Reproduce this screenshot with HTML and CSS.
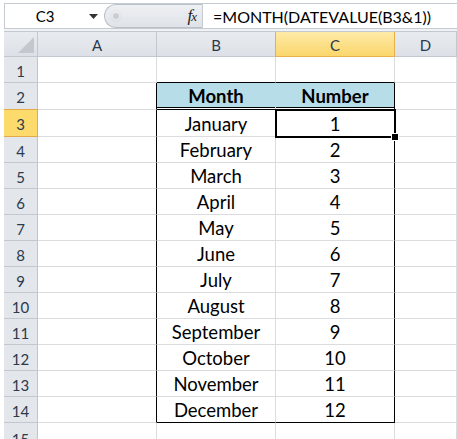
FILE: index.html
```
<!DOCTYPE html>
<html>
<head>
<meta charset="utf-8">
<link rel="stylesheet" href="styles.css">
</head>
<body>
<div class="formula-bar">
  <div class="name-box">C3</div>
  <div class="dropdown"><svg width="9" height="5" viewBox="0 0 9 5"><polygon points="0,0 9,0 4.5,5" fill="#333"/></svg></div>
  <div class="fx-area">
    <span class="knob"><span class="knob-dot"></span></span>
    <span class="fx"><i>f</i><i class="x">x</i></span>
  </div>
  <div class="formula">=MONTH(DATEVALUE(B3&amp;1))</div>
</div>
<div class="bar-sep"></div>
<div class="sheet">
  <div class="corner"><svg width="16" height="16" viewBox="0 0 16 16"><polygon points="16,0 16,16 0,16" fill="#c3c8cf"/></svg></div>
  <div class="colh">A</div>
  <div class="colh">B</div>
  <div class="colh sel">C</div>
  <div class="colh">D</div>

  <div class="rowh">1</div><div class="cell"></div><div class="cell top-b"></div><div class="cell top-b"></div><div class="cell"></div>
  <div class="rowh">2</div><div class="cell tl"></div><div class="cell head">Month</div><div class="cell head head-r">Number</div><div class="cell"></div>
  <div class="rowh sel">3</div><div class="cell tl"></div><div class="cell">January</div><div class="cell tr">1</div><div class="cell"></div>
  <div class="rowh">4</div><div class="cell tl"></div><div class="cell">February</div><div class="cell tr">2</div><div class="cell"></div>
  <div class="rowh">5</div><div class="cell tl"></div><div class="cell">March</div><div class="cell tr">3</div><div class="cell"></div>
  <div class="rowh">6</div><div class="cell tl"></div><div class="cell">April</div><div class="cell tr">4</div><div class="cell"></div>
  <div class="rowh">7</div><div class="cell tl"></div><div class="cell">May</div><div class="cell tr">5</div><div class="cell"></div>
  <div class="rowh">8</div><div class="cell tl"></div><div class="cell">June</div><div class="cell tr">6</div><div class="cell"></div>
  <div class="rowh">9</div><div class="cell tl"></div><div class="cell">July</div><div class="cell tr">7</div><div class="cell"></div>
  <div class="rowh">10</div><div class="cell tl"></div><div class="cell">August</div><div class="cell tr">8</div><div class="cell"></div>
  <div class="rowh">11</div><div class="cell tl"></div><div class="cell">September</div><div class="cell tr">9</div><div class="cell"></div>
  <div class="rowh">12</div><div class="cell tl"></div><div class="cell">October</div><div class="cell tr">10</div><div class="cell"></div>
  <div class="rowh">13</div><div class="cell tl"></div><div class="cell">November</div><div class="cell tr">11</div><div class="cell"></div>
  <div class="rowh">14</div><div class="cell tl"></div><div class="cell bot">December</div><div class="cell tr bot">12</div><div class="cell"></div>
  <div class="rowh">15</div><div class="cell"></div><div class="cell"></div><div class="cell"></div><div class="cell"></div>

  <div class="selection"><span class="handle"></span></div>
</div>
</body>
</html>
```
FILE: styles.css
```
html, body {
  margin: 0;
  padding: 0;
  background: #fff;
  overflow: hidden;
}
body {
  width: 457px;
  height: 439px;
  font-family: Lato, "Open Sans", sans-serif;
  color: #000;
}
.formula-bar {
  margin: 3px 0 0 4px;
  height: 24px;
  border-top: 1px solid #c6cbd2;
  border-bottom: 1px solid #c6cbd2;
  border-left: 1px solid #c6cbd2;
  display: flex;
  align-items: stretch;
}
.name-box {
  width: 76px;
  font-size: 15px;
  display: flex;
  align-items: center;
  justify-content: center;
  padding-left: 2px;
}
.dropdown {
  width: 21px;
  display: flex;
  align-items: center;
  justify-content: center;
  padding-top: 1px;
}
.fx-area {
  width: 99px;
  border: 1px solid #b9c0c9;
  border-right: 1px solid #c6cbd2;
  border-radius: 13px 0 0 13px;
  background: linear-gradient(#eef0f3, #dfe3e8);
  display: flex;
  align-items: center;
  justify-content: space-between;
  box-sizing: border-box;
}
.knob {
  width: 12px;
  height: 12px;
  margin-left: 5px;
  border-radius: 50%;
  background: radial-gradient(circle at 50% 40%, #f4f5f7, #d3d8de);
  display: flex;
  align-items: center;
  justify-content: center;
}
.knob-dot {
  width: 6px;
  height: 6px;
  border-radius: 50%;
  background: #c9ced5;
}
.fx {
  font-family: "Liberation Serif", serif;
  font-size: 17px;
  color: #222;
  margin-right: 6px;
  letter-spacing: -1px;
}
.fx .x {
  font-size: 13px;
}
.formula {
  flex: 1;
  font-size: 16px;
  display: flex;
  align-items: center;
  padding-left: 10px;
  padding-top: 1px;
  white-space: nowrap;
}
.bar-sep {
  margin-left: 4px;
  height: 2px;
  background: #f1f2f4;
  border-bottom: 1px solid #c3c9d1;
}
.sheet {
  position: relative;
  margin-left: 4px;
  display: grid;
  grid-template-columns: 34px 119px 119px 119px 1fr;
  grid-template-rows: 25px 26px 27px 27px repeat(11, 26px) 30px;
}
.sheet > div {
  box-sizing: border-box;
}
.corner, .colh, .rowh {
  background: linear-gradient(#e8ebef, #dde1e7);
  border-right: 1px solid #c3c8d0;
  border-bottom: 1px solid #c3c8d0;
  color: #2b3a4d;
  font-size: 15px;
  display: flex;
  align-items: center;
  justify-content: center;
}
.corner {
  align-items: flex-end;
  justify-content: flex-end;
  padding: 0 3px 3px 0;
}
.colh {
  padding-top: 1px;
}
.rowh {
  background: #e3e6eb;
  border-right-color: #c0c5cd;
  padding-top: 2px;
}
.colh.sel {
  background: linear-gradient(#feeaa8, #fad66c);
  border-right: 1px solid #e8b04a;
  border-left: 1px solid #e8b04a;
  border-bottom: 1px solid #e8b04a;
  margin-left: -1px;
}
.rowh.sel {
  background: #fdda6c;
  border-right: 1px solid #e3ab48;
  border-bottom: 1px solid #e3ab48;
  border-top: 1px solid #e3ab48;
  margin-top: -1px;
}
.cell {
  border-right: 1px solid #dadcdf;
  border-bottom: 1px solid #dadcdf;
  font-size: 18.5px;
  display: flex;
  align-items: flex-end;
  justify-content: center;
  padding-bottom: 1px;
}
.cell.top-b {
  border-bottom-color: #000;
}
.cell.tl {
  border-right-color: #000;
}
.cell.tr {
  border-right-color: #000;
}
.cell.bot {
  border-bottom-color: #000;
}
.cell.head {
  background: #b7dee8;
  border-right-color: #b7dee8;
  border-bottom-color: #000;
  box-shadow: inset 0 -1px 0 #fff, inset 0 -2px 0 #000;
  font-weight: bold;
  padding-bottom: 2px;
}
.cell.head-r {
  border-right-color: #000;
}
.selection {
  position: absolute;
  left: 271px;
  top: 77px;
  width: 121px;
  height: 29px;
  border: 2px solid #000;
  box-sizing: border-box;
}
.handle {
  position: absolute;
  right: -5px;
  bottom: -5px;
  width: 6px;
  height: 6px;
  background: #000;
  border: 1px solid #fff;
}
```
